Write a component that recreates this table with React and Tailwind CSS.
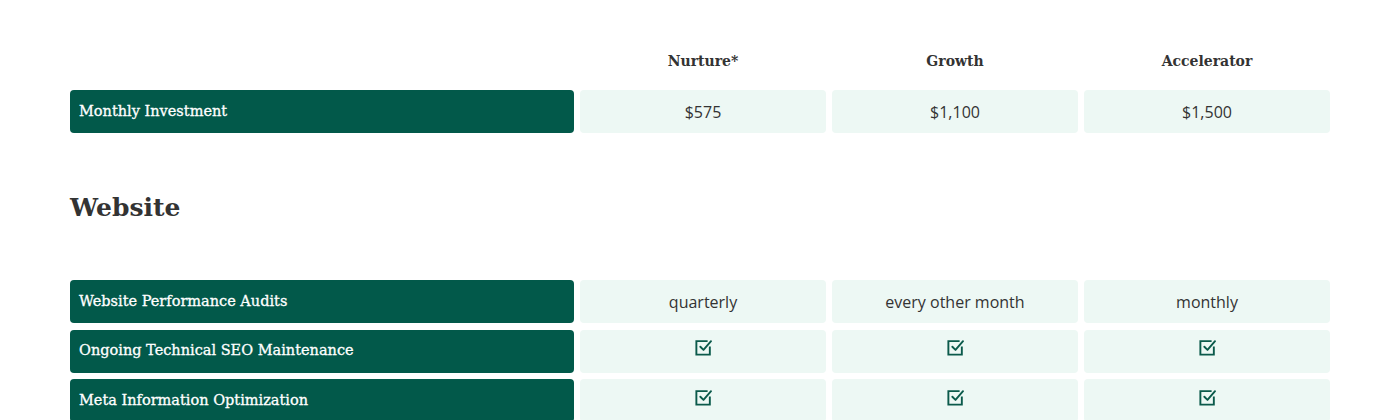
import React from 'react';

const plans = ['Nurture*', 'Growth', 'Accelerator'];

const websiteRows = [
  { label: 'Website Performance Audits', values: ['quarterly', 'every other month', 'monthly'] },
  { label: 'Ongoing Technical SEO Maintenance', values: [true, true, true] },
  { label: 'Meta Information Optimization', values: [true, true, true] },
];

function CheckBox() {
  return (
    <svg width="19" height="19" viewBox="0 0 24 24" fill="none" stroke="#0b5a4b" strokeWidth="2.4" strokeLinecap="square" className="-mt-[7px]">
      <path d="M20 12V21H3V4h13" />
      <path d="M8 11l4 4 9.5-11" strokeLinecap="round" strokeLinejoin="round" />
    </svg>
  );
}

function Row({ label, values }) {
  return (
    <div className="grid grid-cols-[504px_246px_246px_246px] gap-x-[6px]">
      <div className="h-[43px] rounded-[4px] bg-[#02594a] flex items-center pl-[9px] text-white text-[14.5px]" style={{ fontFamily: '"DejaVu Serif", serif', WebkitTextStroke: '0.3px white' }}>
        {label}
      </div>
      {values.map((v, i) => (
        <div key={i} className="h-[43px] rounded-[4px] bg-[#edf8f4] flex items-center justify-center text-[16px] text-[#333] font-medium" style={{ fontFamily: '"Open Sans", sans-serif' }}>
          {v === true ? <CheckBox /> : v}
        </div>
      ))}
    </div>
  );
}

export default function App() {
  return (
    <div className="w-[1400px] h-[420px] bg-white overflow-hidden">
      <div className="pl-[70px] pt-[48px]">
        <div className="grid grid-cols-[504px_246px_246px_246px] gap-x-[6px] mb-[16px]">
          <div />
          {plans.map((p) => (
            <div key={p} className="h-[26px] flex items-center justify-center text-[14px] font-bold text-[#333]" style={{ fontFamily: '"DejaVu Serif", serif' }}>
              {p}
            </div>
          ))}
        </div>
        <Row label="Monthly Investment" values={['$575', '$1,100', '$1,500']} />

        <h2 className="mt-[57px] mb-[54px] h-[36px] flex items-center text-[25px] font-bold text-[#333]" style={{ fontFamily: '"DejaVu Serif", serif' }}>
          Website
        </h2>

        <div className="flex flex-col gap-y-[6.5px]">
          {websiteRows.map((r) => (
            <Row key={r.label} label={r.label} values={r.values} />
          ))}
        </div>
      </div>
    </div>
  );
}
